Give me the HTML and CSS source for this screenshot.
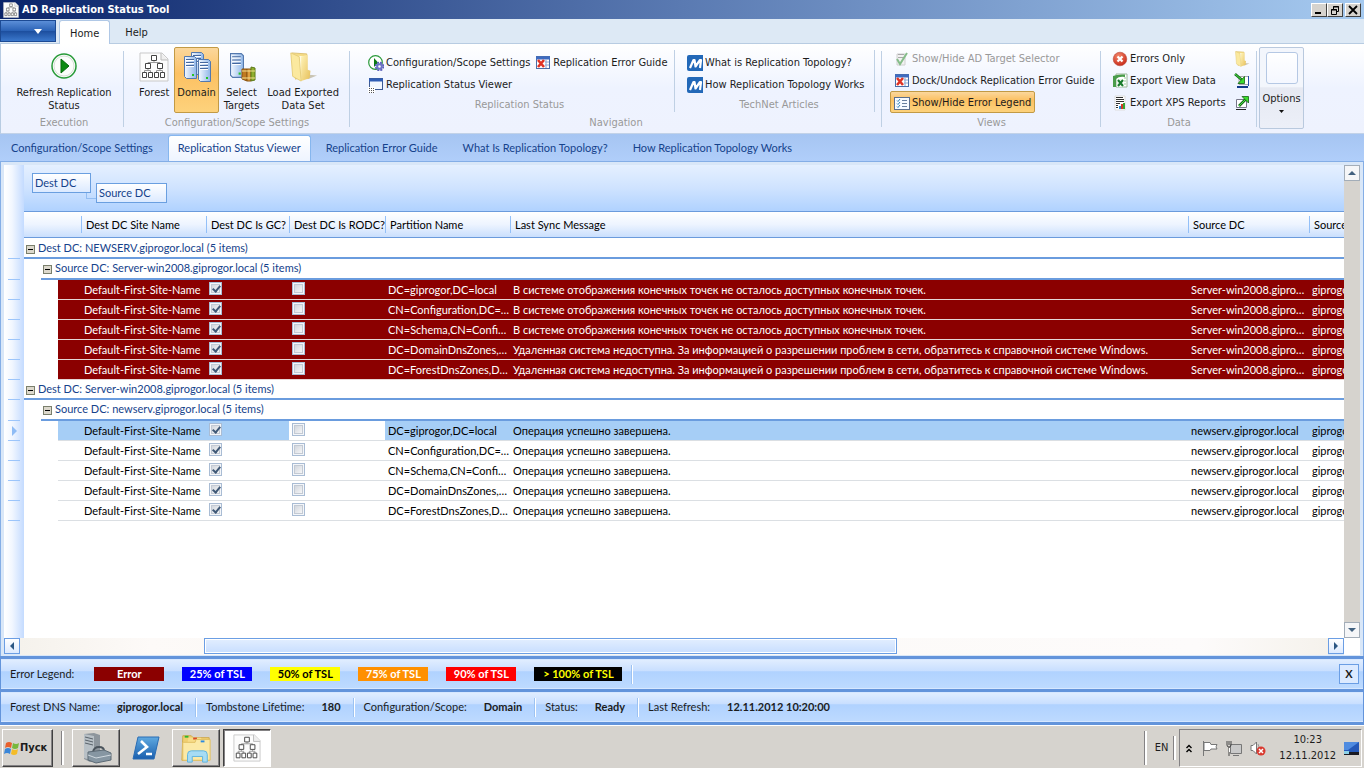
FILE: index.html
```html
<!DOCTYPE html>
<html lang="en">
<head>
<meta charset="utf-8">
<title>AD Replication Status Tool</title>
<link rel="stylesheet" href="styles.css">
</head>
<body>
<svg class="defs" aria-hidden="true">
  <defs>
    <linearGradient id="srv" x1="0" y1="0" x2="1" y2="0"><stop offset="0" stop-color="#f4f9ff"/><stop offset="1" stop-color="#8fb6e8"/></linearGradient>
    <linearGradient id="fold" x1="0" y1="0" x2="1" y2="1"><stop offset="0" stop-color="#fff3b8"/><stop offset="1" stop-color="#e6bf58"/></linearGradient>
    <linearGradient id="ps" x1="0" y1="0" x2="0" y2="1"><stop offset="0" stop-color="#5fa9e0"/><stop offset="1" stop-color="#1b5fae"/></linearGradient>
    <radialGradient id="red" cx=".4" cy=".3" r=".8"><stop offset="0" stop-color="#f58a6c"/><stop offset="1" stop-color="#c21f10"/></radialGradient>
    <symbol id="tree" viewBox="0 0 30 30">
      <path d="M1 1H23L29 7V29H1Z" fill="#fcfcfc" stroke="#c9c9c9"/>
      <path d="M22 1V8H29" fill="#eee" stroke="#bbb"/>
      <path d="M15 8V10.500M9 13V10.500H21V13M5.500 21V18.500H11.500V21M17.500 21V18.500H23.500V21M9 17V18.500M21 17V18.500" fill="none" stroke="#999"/>
      <g fill="#fff" stroke="#444"><path d="M12.500 3.500H17.500V8.500H12.500ZM6.500 11.500H11.500V16.500H6.500ZM18.500 11.500H23.500V16.500H18.500ZM3.500 20.500H7.500V25.500H3.500ZM9.500 20.500H13.500V25.500H9.500ZM15.500 20.500H19.500V25.500H15.500ZM21.500 20.500H25.500V25.500H21.500Z"/></g>
    </symbol>
    <symbol id="server" viewBox="0 0 13 23">
      <path d="M.5.5H10.500L12.500 2.500V22.500H2.500L.5 20.500Z" fill="url(#srv)" stroke="#5378ae"/>
      <path d="M2 3.500H10M2 6.500H10M2 9.500H10" stroke="#45689f"/><path d="M2 4.500H10M2 7.500H10M2 10.500H10" stroke="#fff"/>
      <rect x="8" y="18" width="2" height="2" fill="#25c425"/>
    </symbol>
    <symbol id="folder" viewBox="0 0 32 32">
      <path d="M20 24L31 25L21 29Z" fill="#c9c4b4"/>
      <path d="M4 1L20 2V24L8 29Z" fill="#f5dc86" stroke="#dcc070"/>
      <path d="M11 4L20 5V27L14 31Z" fill="#fffbe0"/>
      <path d="M14 5L21 3V19L24 20L23 28L14 31Z" fill="url(#fold)"/>
      <path d="M3 1L12 5L14 31L5 26Z" fill="#fbe99f" stroke="#e5cd7a"/>
    </symbol>
    <symbol id="play" viewBox="0 0 26 26">
      <circle cx="13" cy="13" r="12" fill="#fbfdfb" stroke="#279a38" stroke-width="1.500"/>
      <circle cx="13" cy="13" r="10" fill="none" stroke="#d7dfd7"/>
      <path d="M10 6L18 13L10 20Z" fill="#0c8a12" stroke="#056a0b"/>
    </symbol>
    <symbol id="playgear" viewBox="0 0 16 16">
      <circle cx="7.500" cy="7.500" r="6.800" fill="#fff" stroke="#2b9a3b" stroke-width="1.200"/><path d="M6 3L10 7.500L6 12Z" fill="#0a7a12"/>
      <circle cx="11.500" cy="11.500" r="3.800" fill="none" stroke="#5a5fb8" stroke-width="1.800" stroke-dasharray="2 1"/><circle cx="11.500" cy="11.500" r="2.300" fill="#fff" stroke="#6d74c8" stroke-width="2"/>
    </symbol>
    <symbol id="errgrid" viewBox="0 0 16 16">
      <rect x="1.500" y="1.500" width="13" height="12" fill="#fff" stroke="#4a6ea8"/><path d="M1 3H15" stroke="#3e6bc0" stroke-width="3"/>
      <path d="M10 7H14M10 10H14M11 5V13" stroke="#8aa4d0"/><path d="M3 5L9 12M9 5L3 12" stroke="#e03325" stroke-width="2.600"/>
    </symbol>
    <symbol id="viewer" viewBox="0 0 16 16">
      <rect x="1.500" y="1.500" width="13" height="11" fill="#f2f7ff" stroke="#3c5a94"/><path d="M1 3H15" stroke="#2f5db5" stroke-width="3"/>
      <path d="M0 10H7V16H0Z" fill="#fff"/><path d="M1 11.500H6M1 13.500H6M1 15.500H6" stroke="#555" stroke-dasharray="1 1"/>
    </symbol>
    <symbol id="msdn" viewBox="0 0 16 16">
      <path d="M2 0H16V16H2Q0 16 0 14V2Q0 0 2 0Z" fill="#2268b8"/><path d="M3 13L6.500 5H7.500L8.500 11.500L13 5H14L13 13" fill="none" stroke="#fff" stroke-width="2.200" stroke-linejoin="round"/>
    </symbol>
    <symbol id="checkdoc" viewBox="0 0 16 16">
      <path d="M3 3H11V14H3Z" fill="#f2f2f2" stroke="#d0d0d0"/><path d="M4 3.500H10M4 6.500H10" stroke="#aaa"/><path d="M3 8L6 13L13 2" fill="none" stroke="#86bd8a" stroke-width="2"/>
    </symbol>
    <symbol id="legendicon" viewBox="0 0 16 16">
      <rect x=".5" y="2.500" width="15" height="12" fill="#f7faff" stroke="#5c6f8e"/><path d="M8 5.500H13M8 8.500H13M8 11.500H13" stroke="#69809f"/><path d="M3 5.500L4 6.500L6 4M3 8.500L4 9.500L6 7M3 11.500L4 12.500L6 10" fill="none" stroke="#2c80b8"/>
    </symbol>
    <symbol id="error" viewBox="0 0 16 16"><circle cx="8" cy="8" r="6.800" fill="url(#red)" stroke="#b84a3a" stroke-width=".6"/><path d="M5.500 5.500L10.500 10.500M10.500 5.500L5.500 10.500" stroke="#fff" stroke-width="2.200"/></symbol>
    <symbol id="excel" viewBox="0 0 16 16">
      <path d="M4 1H15V14H4Z" fill="#fff" stroke="#9ab79a"/><path d="M1 3Q5 1 13 1.500V4Q7 3 4 6V14H1Z" fill="#4a9c4a"/><path d="M5 6H11V14H5Z" fill="#eef8ee"/><path d="M6 7L11 13M11 7L6 13" stroke="#187a2c" stroke-width="2"/><path d="M12 5H14M12 8H14M12 11H14" stroke="#9c9"/>
    </symbol>
    <symbol id="report" viewBox="0 0 16 16">
      <path d="M3 1H13V15H3Z" fill="#fff" stroke="#ddd"/><path d="M4 2.500H11M4 4.500H12M4 6.500H12M4 8.500H8M4 10.500H6M4 12.500H6" stroke="#333"/><path d="M8 14V11" stroke="#2a8dd8" stroke-width="2"/><path d="M10 14V9" stroke="#d43a2a" stroke-width="2"/><path d="M12 14V8" stroke="#36a836" stroke-width="2"/>
    </symbol>
    <symbol id="import" viewBox="0 0 16 16">
      <path d="M5 3.500H14.500V11.500H5Z" fill="#fff" stroke="#aaa"/><path d="M3 14H14" stroke="#123a8a" stroke-width="2"/><path d="M14.500 3V13" stroke="#2750a8"/><path d="M1 1L8 7" stroke="#156c15" stroke-width="2.600"/><path d="M1 1L8 7" stroke="#48e048"/><path d="M10.500 3.500V10.500H4Z" fill="#3bdc2c" stroke="#146414" stroke-width=".8"/>
    </symbol>
    <symbol id="export" viewBox="0 0 16 16">
      <path d="M2.500 4.500H12.500V12.500H2.500Z" fill="#fff" stroke="#778"/><path d="M2 14.500H12" stroke="#222"/><path d="M5 11L12 4" stroke="#156c15" stroke-width="2.600"/><path d="M5 11L12 4" stroke="#48e048"/><path d="M8 1.500H14.500V8Z" fill="#3bdc2c" stroke="#146414" stroke-width=".8"/>
    </symbol>
  </defs>
</svg>

<div class="screen">
<header class="titlebar">
  <svg class="ic16"><use href="#tree"/></svg>
  <h1>AD Replication Status Tool</h1>
  <div class="winbtns">
    <button aria-label="Minimize"><svg viewBox="0 0 12 10"><path d="M2 8H8" stroke="#000" stroke-width="2"/></svg></button>
    <button aria-label="Restore"><svg viewBox="0 0 12 10"><path d="M4.500 4V1.500H9.500V6.500H8M4 2H10M2.500 4.500H7.500V9.500H2.500ZM2 5H8" fill="none" stroke="#000"/></svg></button>
    <button aria-label="Close" class="close"><svg viewBox="0 0 12 10"><path d="M2 1L10 9M10 1L2 9" stroke="#000" stroke-width="1.800"/></svg></button>
  </div>
</header>

<nav class="menutabs">
  <button class="appbtn" aria-label="Application menu"><svg viewBox="0 0 8 5"><path d="M0 0H8L4 5Z" fill="#fff"/></svg></button>
  <button class="mtab on">Home</button>
  <button class="mtab">Help</button>
</nav>

<section class="ribbon">
  <div class="grp g-exec">
    <div class="row"><button class="big"><svg class="i-play"><use href="#play"/></svg><span>Refresh Replication<br>Status</span></button></div>
    <div class="glabel">Execution</div>
  </div>
  <div class="grp g-conf">
    <div class="row">
      <button class="big"><svg class="ic32"><use href="#tree"/></svg><span>Forest</span></button>
      <button class="big on"><svg class="ic32" viewBox="0 0 30 30"><use href="#server" x="9" y="0" width="13" height="23"/><use href="#server" x="2" y="4" width="13" height="23"/><use href="#server" x="16" y="7" width="13" height="23"/></svg><span>Domain</span></button>
      <button class="big"><svg class="ic32" viewBox="0 0 30 30"><use href="#server" x="3" y="1" width="14" height="25"/><path d="M15 17H20V29L15 27Z" fill="#c07a20" stroke="#8a5510"/><path d="M20 17H24V29H20Z" fill="#e0a040" stroke="#8a5510"/><path d="M24 15L28 16V28L24 29Z" fill="#8fae30" stroke="#5c7a18"/><path d="M15 19H28M15 26H28" stroke="#f4e090"/></svg><span>Select<br>Targets</span></button>
      <button class="big"><svg class="ic32"><use href="#folder"/></svg><span>Load Exported<br>Data Set</span></button>
    </div>
    <div class="glabel">Configuration/Scope Settings</div>
  </div>
  <div class="grp g-nav">
    <div class="row">
      <div class="sub s-rep">
        <div class="pair">
          <button class="small"><svg class="ic16"><use href="#playgear"/></svg>Configuration/Scope Settings</button>
          <button class="small"><svg class="ic16"><use href="#errgrid"/></svg>Replication Error Guide</button>
          <button class="small"><svg class="ic16"><use href="#viewer"/></svg>Replication Status Viewer</button>
        </div>
        <div class="slabel">Replication Status</div>
      </div>
      <div class="sub s-tech">
        <button class="small"><svg class="ic16"><use href="#msdn"/></svg>What is Replication Topology?</button>
        <button class="small"><svg class="ic16"><use href="#msdn"/></svg>How Replication Topology Works</button>
        <div class="slabel">TechNet Articles</div>
      </div>
    </div>
    <div class="glabel">Navigation</div>
  </div>
  <div class="grp g-view">
    <div class="stack">
      <button class="small" disabled><svg class="ic16"><use href="#checkdoc"/></svg>Show/Hide AD Target Selector</button>
      <button class="small"><svg class="ic16"><use href="#errgrid"/></svg>Dock/Undock Replication Error Guide</button>
      <button class="small on"><svg class="ic16"><use href="#legendicon"/></svg>Show/Hide Error Legend</button>
    </div>
    <div class="glabel">Views</div>
  </div>
  <div class="grp g-data">
    <div class="row">
      <div class="stack">
        <button class="small"><svg class="ic16"><use href="#error"/></svg>Errors Only</button>
        <button class="small"><svg class="ic16"><use href="#excel"/></svg>Export View Data</button>
        <button class="small"><svg class="ic16"><use href="#report"/></svg>Export XPS Reports</button>
      </div>
      <div class="stack">
        <button class="small" aria-label="Open"><svg class="ic16"><use href="#folder"/></svg></button>
        <button class="small" aria-label="Import"><svg class="ic16"><use href="#import"/></svg></button>
        <button class="small" aria-label="Export"><svg class="ic16"><use href="#export"/></svg></button>
      </div>
    </div>
    <div class="glabel">Data</div>
  </div>
  <button class="options"><i></i><span>Options</span><svg viewBox="0 0 5 3"><path d="M0 0H5L2.500 3Z" fill="#111"/></svg></button>
</section>

<nav class="doctabs">
  <button>Configuration/Scope Settings</button>
  <button class="on">Replication Status Viewer</button>
  <button>Replication Error Guide</button>
  <button>What Is Replication Topology?</button>
  <button>How Replication Topology Works</button>
</nav>

<main class="frame">
  <div class="view">
    <div class="grid">
      <div class="groupby"><button class="chip">Dest DC</button><i class="link"></i><button class="chip second">Source DC</button></div>
      <table>
        <colgroup><col class="c-sel"><col class="c-ind"><col class="c-blank"><col class="c-site"><col class="c-gc"><col class="c-ro"><col class="c-part"><col class="c-msg"><col class="c-src"><col class="c-last"></colgroup>
        <thead><tr><td class="sel"></td><th></th><th></th><th><span>Dest DC Site Name</span></th><th><span>Dest DC Is GC?</span></th><th><span>Dest DC Is RODC?</span></th><th><span>Partition Name</span></th><th><span>Last Sync Message</span></th><th><span>Source DC</span></th><th><span>Source</span></th></tr></thead>
        <tbody>
          <tr class="g1 first"><td class="sel"></td><td colspan="9"><button class="tog" aria-label="Collapse"></button>Dest DC: NEWSERV.giprogor.local (5 items)</td></tr>
          <tr class="g2"><td class="sel"></td><td colspan="9"><div><button class="tog" aria-label="Collapse"></button>Source DC: Server-win2008.giprogor.local (5 items)</div></td></tr>
        </tbody>
        <tbody class="bad">
          <tr><td class="sel"></td><td class="ind"></td><td></td><td>Default-First-Site-Name</td><td><input type="checkbox" aria-label="GC" checked></td><td><input type="checkbox" aria-label="RODC"></td><td class="part">DC=giprogor,DC=local</td><td>В системе отображения конечных точек не осталось доступных конечных точек.</td><td>Server-win2008.giprogor.local</td><td class="cut">giprogo</td></tr>
          <tr><td class="sel"></td><td class="ind"></td><td></td><td>Default-First-Site-Name</td><td><input type="checkbox" aria-label="GC" checked></td><td><input type="checkbox" aria-label="RODC"></td><td class="part">CN=Configuration,DC=giprogor</td><td>В системе отображения конечных точек не осталось доступных конечных точек.</td><td>Server-win2008.giprogor.local</td><td class="cut">giprogo</td></tr>
          <tr><td class="sel"></td><td class="ind"></td><td></td><td>Default-First-Site-Name</td><td><input type="checkbox" aria-label="GC" checked></td><td><input type="checkbox" aria-label="RODC"></td><td class="part">CN=Schema,CN=Configuration</td><td>В системе отображения конечных точек не осталось доступных конечных точек.</td><td>Server-win2008.giprogor.local</td><td class="cut">giprogo</td></tr>
          <tr><td class="sel"></td><td class="ind"></td><td></td><td>Default-First-Site-Name</td><td><input type="checkbox" aria-label="GC" checked></td><td><input type="checkbox" aria-label="RODC"></td><td class="part">DC=DomainDnsZones,DC=giprogor</td><td>Удаленная система недоступна. За информацией о разрешении проблем в сети, обратитесь к справочной системе Windows.</td><td>Server-win2008.giprogor.local</td><td class="cut">giprogo</td></tr>
          <tr><td class="sel"></td><td class="ind"></td><td></td><td>Default-First-Site-Name</td><td><input type="checkbox" aria-label="GC" checked></td><td><input type="checkbox" aria-label="RODC"></td><td class="part">DC=ForestDnsZones,DC=giprogor</td><td>Удаленная система недоступна. За информацией о разрешении проблем в сети, обратитесь к справочной системе Windows.</td><td>Server-win2008.giprogor.local</td><td class="cut">giprogo</td></tr>
        </tbody>
        <tbody>
          <tr class="g1"><td class="sel"></td><td colspan="9"><button class="tog" aria-label="Collapse"></button>Dest DC: Server-win2008.giprogor.local (5 items)</td></tr>
          <tr class="g2"><td class="sel"></td><td colspan="9"><div><button class="tog" aria-label="Collapse"></button>Source DC: newserv.giprogor.local (5 items)</div></td></tr>
        </tbody>
        <tbody class="good">
          <tr class="current"><td class="sel"><svg viewBox="0 0 5 10"><path d="M0 0L5 5L0 10Z" fill="#8fbcf5"/></svg></td><td class="ind"></td><td></td><td>Default-First-Site-Name</td><td><input type="checkbox" aria-label="GC" checked></td><td class="focus"><input type="checkbox" aria-label="RODC"></td><td class="part">DC=giprogor,DC=local</td><td>Операция успешно завершена.</td><td>newserv.giprogor.local</td><td class="cut">giprogo</td></tr>
          <tr><td class="sel"></td><td class="ind"></td><td></td><td>Default-First-Site-Name</td><td><input type="checkbox" aria-label="GC" checked></td><td><input type="checkbox" aria-label="RODC"></td><td class="part">CN=Configuration,DC=giprogor</td><td>Операция успешно завершена.</td><td>newserv.giprogor.local</td><td class="cut">giprogo</td></tr>
          <tr><td class="sel"></td><td class="ind"></td><td></td><td>Default-First-Site-Name</td><td><input type="checkbox" aria-label="GC" checked></td><td><input type="checkbox" aria-label="RODC"></td><td class="part">CN=Schema,CN=Configuration</td><td>Операция успешно завершена.</td><td>newserv.giprogor.local</td><td class="cut">giprogo</td></tr>
          <tr><td class="sel"></td><td class="ind"></td><td></td><td>Default-First-Site-Name</td><td><input type="checkbox" aria-label="GC" checked></td><td><input type="checkbox" aria-label="RODC"></td><td class="part">DC=DomainDnsZones,DC=giprogor</td><td>Операция успешно завершена.</td><td>newserv.giprogor.local</td><td class="cut">giprogo</td></tr>
          <tr><td class="sel"></td><td class="ind"></td><td></td><td>Default-First-Site-Name</td><td><input type="checkbox" aria-label="GC" checked></td><td><input type="checkbox" aria-label="RODC"></td><td class="part">DC=ForestDnsZones,DC=giprogor</td><td>Операция успешно завершена.</td><td>newserv.giprogor.local</td><td class="cut">giprogo</td></tr>
        </tbody>
      </table>
    </div>
    <div class="vbar">
      <button aria-label="Scroll up"><svg viewBox="0 0 8 4"><path d="M0 4H8L4 0Z" fill="#42617f"/></svg></button>
      <button aria-label="Scroll down"><svg viewBox="0 0 8 4"><path d="M0 0H8L4 4Z" fill="#42617f"/></svg></button>
    </div>
  </div>
  <div class="hbar">
    <button aria-label="Scroll left"><svg viewBox="0 0 4 8"><path d="M4 0V8L0 4Z" fill="#2c5784"/></svg></button>
    <div class="track"><i></i></div>
    <button aria-label="Scroll right"><svg viewBox="0 0 4 8"><path d="M0 0V8L4 4Z" fill="#2c5784"/></svg></button>
  </div>
</main>

<footer class="bars">
  <div class="bar legend">
    <span class="cap">Error Legend:</span>
    <div class="tags"><b class="t-err">Error</b><b class="t-25">25% of TSL</b><b class="t-50">50% of TSL</b><b class="t-75">75% of TSL</b><b class="t-90">90% of TSL</b><b class="t-100">&gt; 100% of TSL</b></div>
    <i class="vsep"></i>
    <button class="x">X</button>
  </div>
  <div class="bar status">
    <span>Forest DNS Name:</span><b>giprogor.local</b><i class="vsep"></i>
    <span>Tombstone Lifetime:</span><b>180</b><i class="vsep"></i>
    <span>Configuration/Scope:</span><b>Domain</b><i class="vsep"></i>
    <span>Status:</span><b>Ready</b><i class="vsep"></i>
    <span>Last Refresh:</span><b>12.11.2012 10:20:00</b>
  </div>
</footer>

<div class="taskbar">
  <button class="tb start"><svg viewBox="0 0 16 15"><path d="M2 2Q5 0 8 2L7 7Q4 5 1 7Z" fill="#e8602c"/><path d="M9 2Q12 4 15 2L14 7Q11 9 8 7Z" fill="#78b83c"/><path d="M1 8Q4 6 7 8L6 13Q3 11 0 13Z" fill="#3a86d8"/><path d="M8 8Q11 10 14 8L13 13Q10 15 7 13Z" fill="#f4bc28"/></svg>Пуск</button>
  <i class="tsep"></i>
  <button class="tb item" aria-label="Server Manager"><svg viewBox="0 0 32 32"><path d="M4 2L14 1L20 3V26L10 30L4 27Z" fill="#8d959c"/><path d="M4 2L14 4V29L4 26Z" fill="#b8c0c6"/><path d="M5 5L13 7M5 8L13 10M5 11L13 13" stroke="#59626a"/><path d="M13 20Q14 15 19 15Q24 15 24 19" fill="none" stroke="#4b545c" stroke-width="2"/><path d="M8 20L24 18L31 21V28L16 31L8 28Z" fill="#8696a2" stroke="#5c6a75"/><path d="M8 23L16 26L31 23" fill="none" stroke="#cfd8de"/></svg></button>
  <button class="quick" aria-label="PowerShell"><svg viewBox="0 0 28 24"><path d="M6 1H27L22 23H1Z" fill="url(#ps)" stroke="#2a6cb4"/><path d="M9 5L15 11L6 18M14 18H20" fill="none" stroke="#fff" stroke-width="2.600"/></svg></button>
  <button class="tb item" aria-label="Explorer"><svg viewBox="0 0 34 32"><path d="M3 3H12L14 5H31V29H2Z" fill="#f0cf70" stroke="#cda84a"/><path d="M5 3H9V5H5Z" fill="#2eb82e"/><path d="M9 5H22L24 8H32V29H4Z" fill="#f7dc88"/><path d="M14 5H18V7H14Z" fill="#d84a2a"/><path d="M17 7H32V29H3V10H16Z" fill="#fbe9a6" stroke="#e0bf62"/><path d="M22 8H26V10H22Z" fill="#2a8ae0"/><path d="M8 31V23Q8 19 12 19H25Q29 19 29 23V31H24V25H13V31Z" fill="#a6dcf4" stroke="#5cb2de"/></svg></button>
  <button class="tb item on" aria-label="AD Replication Status Tool"><svg viewBox="0 0 30 30"><use href="#tree"/></svg></button>
  <div class="tray">
    <i class="tsep"></i><span class="lang">EN</span><i class="tsep short"></i>
    <div class="well">
      <svg class="chev" viewBox="0 0 6 9"><path d="M.5 4L3 1.500L5.500 4M.5 8L3 5.500L5.500 8" fill="none" stroke="#000" stroke-width="1.400"/></svg>
      <svg class="ic16" viewBox="0 0 16 16"><path d="M1.500 1V16M2 2.500H8L9 4.500H15Q13 7 15 9H9L8 10.500H2Z" fill="#fff" stroke="#777"/></svg>
      <svg class="ic16" viewBox="0 0 16 16"><path d="M4.500 4.500H15.500V13.500H4.500Z" fill="#c9c9c9" stroke="#777"/><path d="M7 15.500H13" stroke="#777"/><path d="M1 1V5Q1 7 3 7V16M5 1V5Q5 7 3 7M3 1V5" fill="none" stroke="#444"/><path d="M3.500 8V12" stroke="#fff"/></svg>
      <svg class="ic16" viewBox="0 0 16 16"><path d="M1 5.500H3L6.500 2V14L3 10.500H1Z" fill="#fff" stroke="#777"/><path d="M8 4Q10 7 8 10" fill="none" stroke="#999"/><circle cx="11" cy="11" r="4.500" fill="#d93a30"/><path d="M9 9L13 13M13 9L9 13" stroke="#fff" stroke-width="1.500"/></svg>
      <time>10:23<br>12.11.2012</time>
      <svg class="desk" viewBox="0 0 15 13"><path d="M0 0H15V10H0Z" fill="#2458b8"/><path d="M0 0H15L4 8H0Z" fill="#4f8be0"/><path d="M0 10H15V13H0Z" fill="#1a1a22"/><path d="M0 9H5V12H0Z" fill="#8bd0e8"/></svg>
    </div>
  </div>
</div>
</div>
</body>
</html>
```
FILE: styles.css
```css
:root {
  --ui: "DejaVu Sans Condensed", "DejaVu Sans", sans-serif;
  --doc: Lato, "Open Sans", sans-serif;
}
* { box-sizing: border-box; }
body { margin: 0; font: 11px/14px var(--ui); color: #1c1c1c; }
button { font: inherit; color: inherit; border: 0; background: none; padding: 0; margin: 0; display: flex; align-items: center; white-space: nowrap; }
svg { display: block; flex: none; }
.defs { position: absolute; width: 0; height: 0; }
.screen { min-height: 100vh; display: flex; flex-direction: column; }
.ic16 { width: 16px; height: 16px; }
.ic32 { width: 30px; height: 30px; }

/* Title bar */
.titlebar { height: 19px; display: flex; align-items: center; padding: 0 3px 0 3px; gap: 3px; background: linear-gradient(90deg, #0a246a, #5a7ab2 50%, #a6caf0); }
.titlebar h1 { margin: 0; flex: 1; color: #fff; font-size: 11px; line-height: 19px; }
.winbtns { display: flex; }
.winbtns button { width: 16px; height: 14px; background: #d6d3ce; border: 1px solid; border-color: #fff #404040 #404040 #fff; justify-content: center; }
.winbtns svg { width: 12px; height: 10px; }
.winbtns .close { margin-left: 2px; }

/* Menu tabs */
.menutabs { height: 25px; display: flex; align-items: flex-end; background: #dde9f5; border-bottom: 1px solid #b8cce2; padding-top: 1px; }
.appbtn { width: 56px; height: 22px; align-self: flex-start; background: linear-gradient(#5b8ed8, #2a61b5 50%, #1d4f9f 52%, #3b78cc); border: 1px solid #1c4a94; justify-content: flex-end; padding-right: 13px; margin-right: 3px; }
.appbtn svg { width: 8px; height: 5px; }
.mtab { height: 23px; padding: 2px 10px 0; border: 1px solid transparent; border-bottom: 0; margin-right: 4px; }
.mtab.on { background: #fff; border-color: #b0c8e6; border-radius: 3px 3px 0 0; height: 24px; margin-bottom: -1px; }

/* Ribbon */
.ribbon { height: 90px; display: flex; padding: 3px 0 2px 3px; background: linear-gradient(#fff, #eef3ff 50%, #eef2fe); border-bottom: 1px solid #c2d2e8; border-left: 1px solid #b8cce2; }
.grp { flex: none; display: flex; flex-direction: column; justify-content: space-between; background: linear-gradient(#bfd0e4, #bfd0e4) right 4px / 1px 76px no-repeat; }
.g-exec { width: 120px; }
.g-conf { width: 226px; }
.g-nav { width: 532px; }
.g-view { width: 219px; }
.g-data { width: 156px; }
.row { display: flex; }
.g-exec .row { justify-content: center; }
.g-conf .row { padding-left: 12px; gap: 2px; }
.glabel, .slabel { color: #999; text-align: center; line-height: 16px; }
.big { flex-direction: column; height: 66px; padding: 4px 2px 0; border: 1px solid transparent; border-radius: 2px; line-height: 13px; gap: 4px; }
.big .i-play { width: 26px; height: 26px; margin: 1px 0 3px; }
.big.on, .small.on { background: linear-gradient(#fbd79c, #fcc163 40%, #fdd27c); border-color: #c29a45; }
.small { height: 22px; gap: 2px; padding: 1px 3px 0; border: 1px solid transparent; border-radius: 2px; }
.small:disabled { color: #999; }
.stack { display: flex; flex-direction: column; align-items: flex-start; }
.sub { padding-top: 4px; display: flex; flex-direction: column; background: linear-gradient(#bfd0e4, #bfd0e4) right 3px / 1px 62px no-repeat; }
.s-rep { width: 325px; padding-left: 14px; }
.pair { display: grid; grid-template-columns: auto auto; justify-content: start; }
.pair .small { padding-right: 0; }
.s-tech { width: 200px; padding-left: 8px; }
.slabel { padding-top: 2px; }
.g-view .stack { padding-left: 8px; }
.g-data .row { justify-content: space-between; padding: 0 7px 0 7px; }
.options { flex-direction: column; width: 45px; height: 82px; margin-left: 2px; border: 1px solid #b9c9de; border-radius: 2px; padding-top: 4px; background: linear-gradient(#f3f6fc 48%, #e6e9f2 50%, #eceff8); }
.options i { width: 32px; height: 32px; border: 1px solid #b5c8e4; border-radius: 3px; background: linear-gradient(#fff, #f4f7ff); }
.options span { margin-top: 8px; }
.options svg { width: 5px; height: 3px; margin-top: 4px; }

/* Document tabs */
.doctabs { height: 27px; display: flex; align-items: flex-end; padding-left: 1px; font: 11px/16px var(--doc); color: #15428b; background: linear-gradient(#a6c5f2, #b0cefa); }
.doctabs button { height: 26px; padding: 0 9px 2px; margin-right: 5px; border: 1px solid transparent; border-bottom: 0; }
.doctabs .on { background: linear-gradient(#fff, #eef4ff); border-color: #86b6ee; border-radius: 3px 3px 0 0; }

/* Grid frame */
.frame { flex: 1; display: flex; flex-direction: column; border: 1px solid #84aee6; border-bottom: 0; background: #d9e7f8; padding: 3px 3px 1px; }
.view { flex: 1; display: flex; }
.grid { flex: 1; min-width: 0; font: 11px/16px var(--doc); background: linear-gradient(90deg, #fff, #f2f7ff 8px, #c4dbff 20px, #fff 20px); }
.groupby { height: 46px; margin-left: 20px; padding: 8px 8px 0; display: flex; color: #15428b; background: linear-gradient(#e5f0ff, #cfe3ff 50%, #b0d2ff); }
.chip { width: 59px; height: 20px; padding: 0 2px; border: 1px solid #6a9fe0; background: linear-gradient(#fff, #dceaff); }
.chip.second { width: 71px; margin-top: 10px; }
.link { width: 10px; height: 6px; margin: 20px 0 0 -5px; border: 1px solid #93bdf2; border-width: 0 0 1px 1px; }
table { width: 100%; table-layout: fixed; border-collapse: separate; border-spacing: 0; }
.c-sel { width: 20px; } .c-ind { width: 34px; } .c-blank { width: 23px; } .c-site { width: 125px; } .c-gc { width: 83px; } .c-ro { width: 96px; } .c-part { width: 125px; } .c-src { width: 121px; } .c-last { width: 35px; }
td, th { padding: 0 2px 0 3px; white-space: nowrap; overflow: hidden; text-overflow: ellipsis; text-align: left; font-weight: 400; height: 20px; }
.part { padding-right: 0; }
.cut { text-overflow: clip; padding-right: 0; }
thead td, th { height: 27px; padding: 0; }
th { border: 1px solid #6b9bdc; border-width: 1px 0; background: linear-gradient(#fff, #edf4ff 50%, #cadffd); text-overflow: clip; color: #000; }
th span { display: block; border-left: 1px solid #93c0f8; padding-left: 4px; line-height: 17px; }
td.sel { padding: 0; background: linear-gradient(#9cc5fb, #9cc5fb) 4px 100% / 12px 1px no-repeat; text-overflow: clip; }
thead td.sel { background: none; }
td.sel svg { width: 5px; height: 10px; margin-left: 8px; }
.g1 td, .g2 td { color: #15428b; background-color: #fff; padding: 0; height: 20px; }
.g1.first td { height: 21px; }
.g1 td.sel, .g2 td.sel { background-color: transparent; }
tbody .g1 td + td { border-bottom: 2px solid #6a9cde; padding-left: 2px; }
.g2 td { height: 21px; }
.g2 div { margin-left: 17px; height: 21px; border-bottom: 2px solid #6a9cde; padding-left: 2px; line-height: 18px; }
.tog { display: inline-block; vertical-align: -1px; width: 9px; height: 9px; margin-right: 3px; border: 1px solid #7a7f6c; background: linear-gradient(#000, #000) center / 5px 1px no-repeat, #dcd8cc; }
.ind { background: #fff; }
.bad td:not(.sel, .ind) { background: #8b0000; color: #fff; border-bottom: 1px solid #e6d6d6; }
.good td:not(.sel, .ind) { background: #fff; color: #000; border-bottom: 1px solid #dbdfe3; }
.good .current td:not(.sel, .ind, .focus) { background: #a6cef6; }
input[type="checkbox"] { appearance: none; display: block; width: 13px; height: 13px; margin: 0 0 2px; border: 1px solid #a9bcd4; outline: 0; background: linear-gradient(135deg, #cdd2da, #fafafa) center / 9px 9px no-repeat, #f4f6f9; box-shadow: inset 0 0 0 1px #f4f6f9, inset 0 0 0 2px #c3cad4; }
input[type="checkbox"]:checked::before { content: ""; box-sizing: border-box; display: block; width: 5px; height: 8px; margin: 1px 0 0 4px; border: solid #3f5876; border-width: 0 2px 2px 0; transform: rotate(40deg); }

/* Scroll bars */
.vbar { width: 16px; display: flex; flex-direction: column; justify-content: space-between; background: #d6d3ce; }
.vbar button { width: 16px; height: 16px; justify-content: center; border: 1px solid #a3adb8; background: #f5f6f8; }
.vbar svg { width: 8px; height: 4px; }
.hbar { height: 17px; display: flex; padding-right: 16px; background: linear-gradient(#fff, #fff) right / 16px 100% no-repeat; }
.hbar button { width: 16px; height: 16px; justify-content: center; border: 1px solid #6b9ee4; background: linear-gradient(#fff, #dceaff); }
.hbar svg { width: 4px; height: 8px; }
.track { flex: 1; background: linear-gradient(90deg, #f5f2ec, #fdfaf8 10%, #f8f6f1 40%, #fcfaf8 60%, #fdfbfb 90%, #f5f2ec); padding-left: 13.7%; }
.track i { display: block; width: 61.7%; height: 16px; border: 1px solid #6b9ee4; box-shadow: inset 0 0 0 1px #fff; background: linear-gradient(#e2eeff, #c8deff); }

/* Legend and status bars */
.bars { flex: none; background: #6394db; padding: 3px 1px; display: flex; flex-direction: column; gap: 3px; font: 11px/14px var(--doc); }
.bar { height: 30px; display: flex; align-items: center; padding: 0 4px 0 9px; border: 1px solid #d6e7ff; border-width: 1px 0; background: linear-gradient(#e0edff, #c9dfff 38%, #b0d2ff 42%, #bddaff); }
.tags { display: flex; gap: 18px; margin-left: 20px; color: #fff; text-align: center; }
.tags b { width: 70px; }
.t-err { background: #8b0000; } .t-25 { background: #00f; } .tags .t-50 { background: #ff0; color: #000; } .t-75 { background: #ff9000; } .t-90 { background: #f00; }
.tags .t-100 { background: #000; color: #ff0; width: 88px; }
.vsep { width: 2px; height: 19px; margin: 0 9px; border-left: 1px solid #9cc2f2; border-right: 1px solid #fff; }
.x { margin-left: auto; width: 20px; height: 20px; justify-content: center; border: 1px solid #6b9ee4; background: #dceaff; font-weight: 700; }
.status b { margin: 0 3px 0 17px; }

/* Taskbar */
.taskbar { height: 43px; flex: none; display: flex; align-items: center; padding: 2px 2px 0; background: #d6d3ce; border-top: 1px solid #fff; font: 11px/16px var(--ui); }
.tb { height: 38px; border: 1px solid; border-color: #fff #404040 #404040 #fff; box-shadow: inset -1px -1px #848284; }
.start { width: 51px; padding-left: 1px; font-weight: 700; }
.start svg { width: 16px; height: 15px; }
.tsep { width: 3px; height: 34px; margin: 0 8px; border-left: 1px solid #848284; border-right: 2px solid #fff; }
.tsep.short { height: 24px; margin: 0 3px 0 5px; }
.item { width: 48px; justify-content: center; }
.item svg { width: 32px; height: 32px; }
.item.on { background: #fff; border-color: #404040 #fff #fff #404040; box-shadow: inset 1px 1px #848284; margin-left: 3px; }
.item.on svg { width: 28px; height: 28px; }
.quick { margin: 0 12px; }
.quick svg { width: 28px; height: 24px; }
.tray { margin-left: auto; display: flex; align-items: center; }
.well { height: 38px; display: flex; align-items: center; gap: 8px; padding: 0 2px 0 6px; border: 1px solid; border-color: #848284 #fff #fff #848284; }
.chev { width: 6px; height: 9px; margin-right: 2px; }
.well time { margin-left: 5px; text-align: center; }
.desk { width: 15px; height: 13px; }
```
